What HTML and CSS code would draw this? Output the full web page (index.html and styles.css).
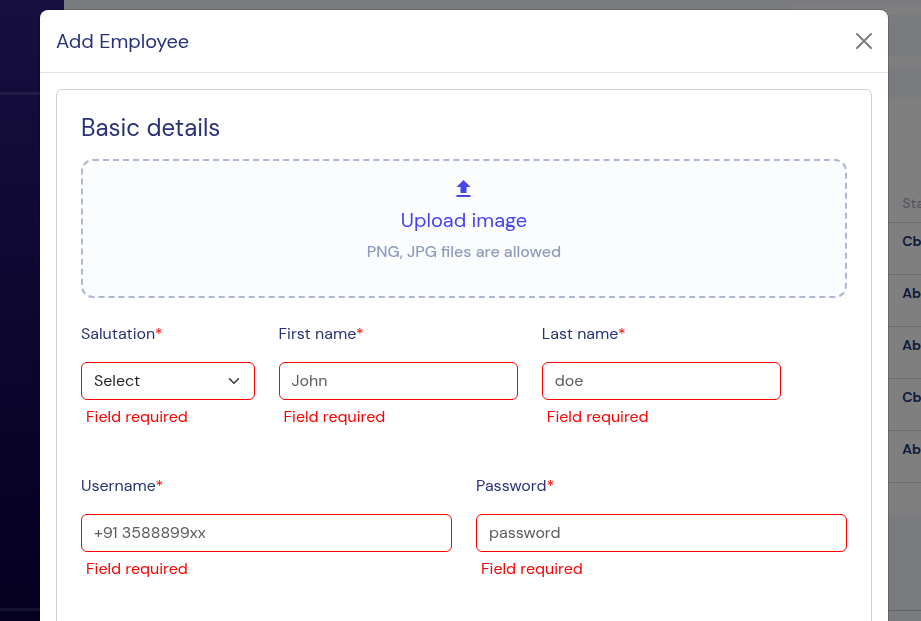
FILE: index.html
```html
<!DOCTYPE html>
<html lang="en">
<head>
<meta charset="utf-8">
<meta name="viewport" content="width=device-width, initial-scale=1">
<title>Add Employee</title>
<link rel="stylesheet" href="styles.css">
</head>
<body>
<div class="shell">
  <aside class="sidebar">
    <hr class="sidebar-rule">
    <hr class="sidebar-rule">
  </aside>
  <main class="main">
    <div class="topbar"><div class="topbar-search"></div></div>
    <section class="list">
      <table class="employees">
        <thead><tr><td class="fill"></td><th scope="col">Sta</th></tr></thead>
        <tbody>
          <tr><td class="fill"></td><td>Cb</td></tr>
          <tr><td class="fill"></td><td>Ab</td></tr>
          <tr><td class="fill"></td><td>Ab</td></tr>
          <tr><td class="fill"></td><td>Cb</td></tr>
          <tr><td class="fill"></td><td>Ab</td></tr>
        </tbody>
      </table>
    </section>
    <footer class="footer"></footer>
  </main>
</div>

<div class="backdrop">
  <div class="modal" role="dialog" aria-labelledby="modal-title">
    <header class="modal-header">
      <h1 class="modal-title" id="modal-title">Add Employee</h1>
      <button class="close" type="button" aria-label="Close">
        <svg viewBox="0 0 16 16" width="16" height="16" fill="none" stroke="currentColor" stroke-width="2" stroke-linecap="round"><path d="M1 1l14 14M15 1L1 15"/></svg>
      </button>
    </header>
    <form class="modal-body" novalidate>
      <div class="card">
        <h2 class="card-title">Basic details</h2>
        <button class="upload" type="button">
          <svg class="upload-icon" viewBox="0 0 16 18" width="16" height="18" fill="currentColor"><path d="M7.500 0l7 7h-4v6h-6V7h-4zM.5 15h14v2H.5z"/></svg>
          <span class="upload-title">Upload image</span>
          <span class="upload-hint">PNG, JPG files are allowed</span>
        </button>
        <div class="fields">
          <div class="field span-3">
            <label for="salutation">Salutation<span class="star">*</span></label>
            <select class="control" id="salutation"><option>Select</option></select>
            <p class="error">Field required</p>
          </div>
          <div class="field span-4">
            <label for="first-name">First name<span class="star">*</span></label>
            <input class="control" id="first-name" type="text" placeholder="John">
            <p class="error">Field required</p>
          </div>
          <div class="field span-4">
            <label for="last-name">Last name<span class="star">*</span></label>
            <input class="control" id="last-name" type="text" placeholder="doe">
            <p class="error">Field required</p>
          </div>
          <div class="field span-6 new-row">
            <label for="username">Username<span class="star">*</span></label>
            <input class="control" id="username" type="text" placeholder="+91 3588899xx">
            <p class="error">Field required</p>
          </div>
          <div class="field span-6">
            <label for="password">Password<span class="star">*</span></label>
            <input class="control" id="password" type="password" placeholder="password">
            <p class="error">Field required</p>
          </div>
        </div>
      </div>
    </form>
  </div>
</div>
</body>
</html>
```
FILE: styles.css
```css
* { box-sizing: border-box; }

body {
  margin: 0;
  overflow: hidden;
  font-family: "DM Sans", Inter, "Liberation Sans", sans-serif;
  font-size: 16px;
  line-height: 24px;
}

h1, h2, p { margin: 0; font-weight: 400; }

/* Page behind the dialog */
.shell { display: flex; min-height: 100vh; background: #f4f6ff; }

.sidebar {
  width: 64px;
  padding-top: 92px;
  background: linear-gradient(#2e1e80, #0a0040);
}
.sidebar-rule {
  height: 3px;
  margin: 0 0 513px;
  border: 0;
  background: rgba(255, 255, 255, 0.14);
}
.sidebar-rule:last-child { margin-bottom: 0; }

.main { flex: 1; min-width: 0; padding-top: 5px; }

.topbar {
  margin-left: 720px;
  padding: 10px 0 11px;
  border-radius: 16px 0 0 16px;
  background: #fff;
}
.topbar-search { height: 41px; margin-left: 20px; background: #f4f6ff; }

.list { margin-top: 32px; padding: 92px 0 32px; background: #fff; }

.employees {
  width: calc(100% + 3px);
  border-collapse: collapse;
  font-size: 14px;
  line-height: 20px;
  white-space: nowrap;
}
.employees th, .employees td {
  height: 52px;
  padding: 8px 0;
  border-bottom: 1px solid #dcdcdc;
  vertical-align: top;
  text-align: left;
  font-weight: 600;
  color: #1b2f73;
}
.employees th { height: 31px; padding: 2px 0; font-weight: 500; color: #a8b0c4; }
.employees thead td { height: 31px; padding: 0; }
.employees .fill { width: 100%; }

.footer { margin-top: 95px; border-top: 1px solid #c4c6cc; }

/* Dialog */
.backdrop {
  position: fixed;
  inset: 0;
  padding: 10px 33px 0 40px;
  overflow: hidden;
  background: rgba(0, 0, 0, 0.5);
}
.modal {
  background: #fff;
  border-radius: 8px;
  box-shadow: 0 0 0 1px rgba(0, 0, 0, 0.18);
  color: #293277;
}
.modal-header {
  display: flex;
  align-items: center;
  justify-content: space-between;
  padding: 16px;
  border-bottom: 1px solid #dee2e6;
}
.modal-title { font-size: 20px; line-height: 30px; }
.close {
  display: flex;
  padding: 0;
  border: 0;
  background: none;
  color: #7f7f7f;
}
.modal-body { padding: 16px; }

.card {
  padding: 24px 24px 80px;
  border: 1px solid #d0d0d2;
  border-radius: 6px;
}
.card-title { font-size: 24px; line-height: 28px; }

.upload {
  display: flex;
  flex-direction: column;
  align-items: center;
  width: 100%;
  margin-top: 17px;
  padding: 19px 24px 32px;
  border: 2px dashed #b0b7d1;
  border-radius: 12px;
  background: #fafcfe;
  font: inherit;
  color: #4743ee;
}
.upload-title { margin-top: 7px; font-size: 20px; line-height: 30px; }
.upload-hint { margin-top: 5px; color: #8f9bba; font-weight: 500; }

.fields {
  display: grid;
  grid-template-columns: repeat(12, minmax(0, 1fr));
  gap: 45px 24px;
  margin-top: 24px;
}
.span-3 { grid-column: span 3; }
.span-4 { grid-column: span 4; }
.span-6 { grid-column: span 6; }
.new-row { grid-column: 1 / span 6; }

.field label { display: block; margin-bottom: 16px; }
.star, .error { color: #f00; }
.control {
  display: block;
  width: 100%;
  height: 38px;
  padding: 0 12px;
  border: 1px solid #f00;
  border-radius: 6px;
  background: #fff;
  font: inherit;
  color: #212529;
}
input.control { padding-bottom: 2px; }
select.control {
  appearance: none;
  background: url("data:image/svg+xml,%3Csvg xmlns='http://www.w3.org/2000/svg' viewBox='0 0 16 16'%3E%3Cpath fill='none' stroke='%23343a40' stroke-linecap='round' stroke-linejoin='round' stroke-width='2' d='m2 5 6 6 6-6'/%3E%3C/svg%3E") no-repeat right 14px center / 12px 12px #fff;
}
.control::placeholder { color: #595c5f; opacity: 1; }
.error { margin-top: 5px; padding-left: 5px; }
```
